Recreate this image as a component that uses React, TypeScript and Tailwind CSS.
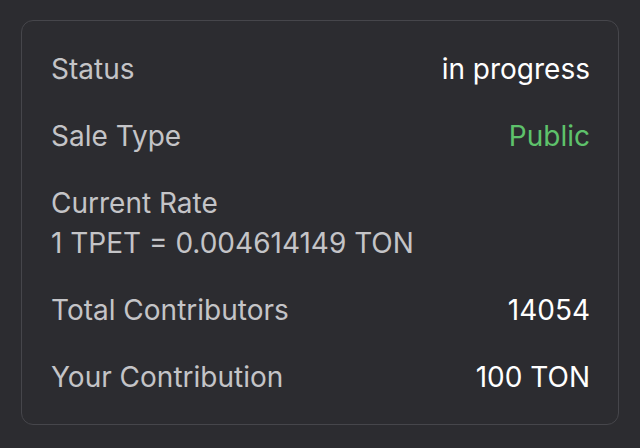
export default function App() {
  const rows = [
    { label: "Status", value: "in progress", tone: "text-white" },
    { label: "Sale Type", value: "Public", tone: "text-[#5ec26b]" },
    { label: "Total Contributors", value: "14054", tone: "text-white" },
    { label: "Your Contribution", value: "100 TON", tone: "text-white" },
  ]

  return (
    <div
      className="w-[640px] h-[448px] bg-[#2c2c30] px-[21px] pt-[20px]"
      style={{ fontFamily: "Inter, 'Liberation Sans', sans-serif" }}
    >
      <div className="flex flex-col gap-[27px] rounded-[12px] border border-[#46464b] pl-[29px] pr-[28px] pt-[28px] pb-[27px] text-[28px] leading-[40px]">
        {rows.slice(0, 2).map((row) => (
          <div key={row.label} className="flex justify-between">
            <span className="text-[#c4c4c7]">{row.label}</span>
            <span className={row.tone}>{row.value}</span>
          </div>
        ))}
        <div className="flex flex-col text-[#c4c4c7]">
          <span>Current Rate</span>
          <span>1 TPET = 0.004614149 TON</span>
        </div>
        {rows.slice(2).map((row) => (
          <div key={row.label} className="flex justify-between">
            <span className="text-[#c4c4c7]">{row.label}</span>
            <span className={row.tone}>{row.value}</span>
          </div>
        ))}
      </div>
    </div>
  )
}
